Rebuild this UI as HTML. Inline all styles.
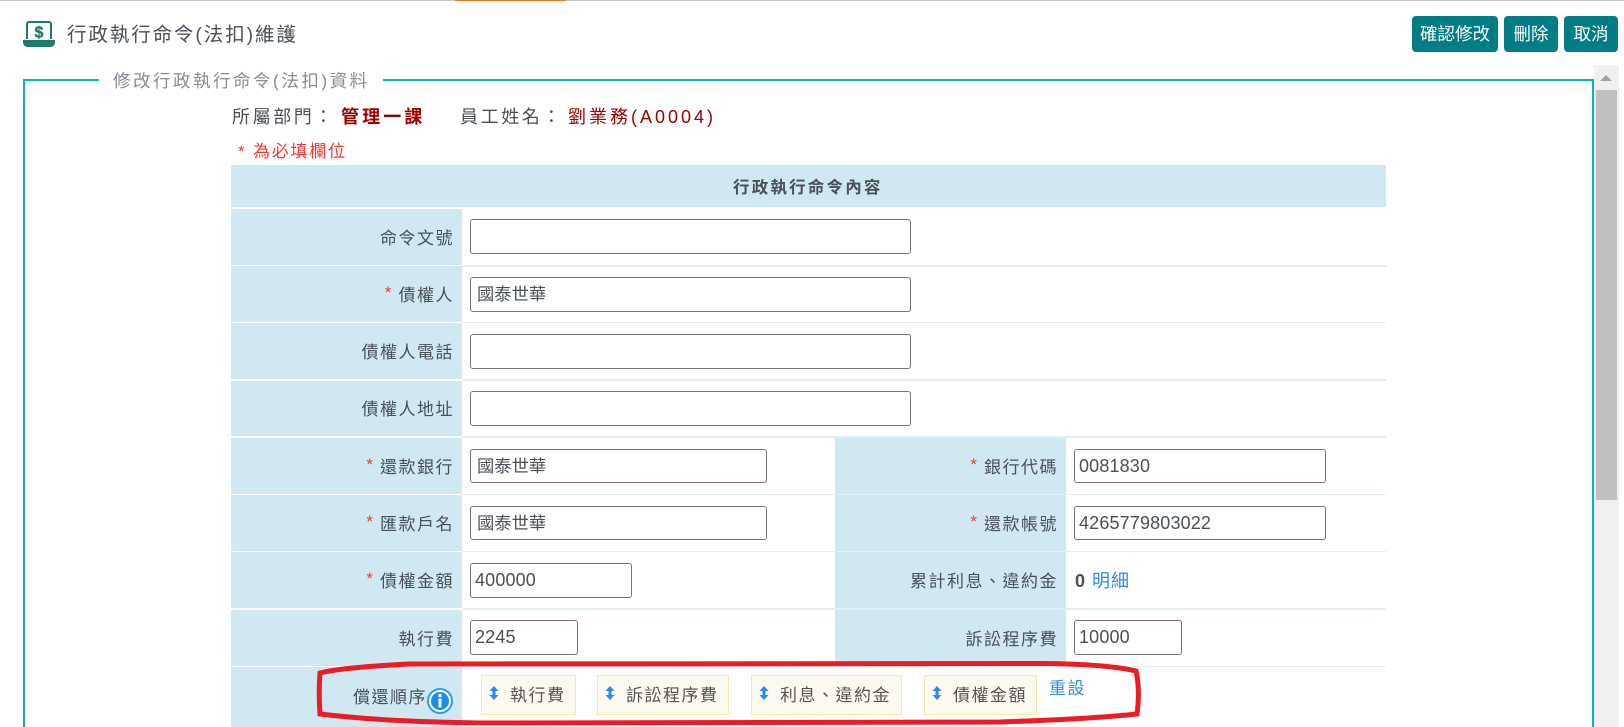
<!DOCTYPE html>
<html lang="zh-Hant">
<head>
<meta charset="utf-8">
<title>行政執行命令(法扣)維護</title>
<style>
html,body{margin:0;padding:0;background:#fff;}
body{position:relative;width:1624px;height:727px;overflow:hidden;font-family:"Liberation Sans","Noto Sans CJK TC",sans-serif;color:#495057;}
.a{position:absolute;white-space:nowrap;}
.bg{position:absolute;background:#cfe8f2;}
.sep{position:absolute;left:462px;width:924px;height:2px;background:#e3eff7;}
.l{position:absolute;display:flex;align-items:center;justify-content:flex-end;font-size:17px;letter-spacing:1.5px;color:#495057;white-space:nowrap;padding-bottom:2px;box-sizing:border-box;}
.l1{left:231px;width:223px;}
.l2{left:835px;width:223px;}
.l b{font-weight:400;color:#f33;margin-right:7px;letter-spacing:0;}
.i{position:absolute;box-sizing:border-box;border:1px solid #767676;border-radius:3px;background:#fff;font-size:18px;line-height:32px;padding-left:6px;color:#495057;white-space:nowrap;overflow:hidden;letter-spacing:.15px;}
.c{font-size:17.3px;letter-spacing:0;}
.btn{position:absolute;top:16px;height:36px;background:#007d85;border-radius:4px;color:#fff;font-size:17.5px;line-height:36px;text-align:center;}
.t{position:absolute;top:675px;height:40px;box-sizing:border-box;border:1px solid #f8e8a8;background:#fbf9f0;font-size:17px;letter-spacing:1.5px;line-height:40px;color:#555;white-space:nowrap;}
.t svg{position:absolute;left:7px;top:9px;}
.t span{position:absolute;top:0;left:28px;}
</style>
</head>
<body>
<div class="a" style="left:0;top:0;width:1624px;height:1px;background:#c8c8c8;"></div>
<div class="a" style="left:455px;top:0;width:111px;height:1px;background:#f07020;"></div>

<svg class="a" style="left:23px;top:21px;" width="32" height="27" viewBox="0 0 32 27">
<path d="M4 18V3a2 2 0 0 1 2-2h20a2 2 0 0 1 2 2v15" fill="none" stroke="#1f7a6b" stroke-width="2"/>
<path d="M0 19h32v2c0 3-2 5-5 5H5c-3 0-5-2-5-5z" fill="#1f7a6b"/>
<text x="16" y="16.500" text-anchor="middle" font-family="Liberation Sans" font-weight="700" font-size="16" stroke="#1f7a6b" stroke-width=".4" fill="#1f7a6b">$</text>
</svg>
<div class="a" style="left:67px;top:21px;font-size:19.5px;line-height:28px;letter-spacing:1.9px;color:#495057;">行政執行命令(法扣)維護</div>

<div class="btn" style="left:1412px;width:86px;">確認修改</div>
<div class="btn" style="left:1504px;width:54px;">刪除</div>
<div class="btn" style="left:1564px;width:54px;">取消</div>

<!-- fieldset -->
<div class="a" style="left:23px;top:79px;width:76px;height:2px;background:#00b8c4;"></div>
<div class="a" style="left:383px;top:79px;width:1211px;height:2px;background:#00b8c4;"></div>
<div class="a" style="left:23px;top:79px;width:2px;height:648px;background:#00b8c4;"></div>
<div class="a" style="left:1592px;top:79px;width:2px;height:648px;background:#00b8c4;"></div>
<div class="a" style="left:113px;top:68px;font-size:17.5px;line-height:26px;letter-spacing:2.5px;color:#868e96;">修改行政執行命令(法扣)資料</div>

<!-- scrollbar -->
<div class="a" style="left:1594px;top:65px;width:25px;height:662px;background:#f0f0f0;"></div>
<div class="a" style="left:1596px;top:90px;width:21px;height:410px;background:#c0c0c0;"></div>
<svg class="a" style="left:1600px;top:74px;" width="12" height="8"><path d="M6 1L12 7H0z" fill="#a3a3a3"/></svg>

<!-- info -->
<div class="a" style="left:232px;top:104px;font-size:18px;line-height:26px;letter-spacing:2.6px;color:#495057;">所屬部門：</div>
<div class="a" style="left:341px;top:104px;font-size:18px;line-height:26px;letter-spacing:3.1px;color:#a00000;font-weight:700;">管理一課</div>
<div class="a" style="left:460px;top:104px;font-size:18px;line-height:26px;letter-spacing:2.6px;color:#495057;">員工姓名：</div>
<div class="a" style="left:568px;top:104px;font-size:18px;line-height:26px;letter-spacing:3px;color:#a00000;">劉業務(A0004)</div>
<div class="a" style="left:238px;top:139.500px;font-size:17px;line-height:24px;letter-spacing:1.8px;color:#f33;">* 為必填欄位</div>

<!-- table header -->
<div class="bg" style="left:231px;top:165px;width:1155px;height:42px;"></div>
<div class="a" style="left:733px;top:175px;font-size:16.5px;line-height:26px;letter-spacing:2.2px;font-weight:700;color:#495057;">行政執行命令內容</div>

<!-- separators -->
<div class="sep" style="top:265px;"></div>
<div class="sep" style="top:322px;height:1px;"></div>
<div class="sep" style="top:379px;"></div>
<div class="sep" style="top:436px;"></div>
<div class="sep" style="top:494px;height:1px;"></div>
<div class="sep" style="top:551px;height:1px;"></div>
<div class="sep" style="top:608px;"></div>
<div class="sep" style="top:666px;height:1px;"></div>

<!-- label column left -->
<div class="bg" style="left:231px;top:209px;width:231px;height:56px;"></div>
<div class="bg" style="left:231px;top:266px;width:231px;height:56px;"></div>
<div class="bg" style="left:231px;top:323px;width:231px;height:56px;"></div>
<div class="bg" style="left:231px;top:381px;width:231px;height:55px;"></div>
<div class="bg" style="left:231px;top:438px;width:231px;height:56px;"></div>
<div class="bg" style="left:231px;top:495px;width:231px;height:56px;"></div>
<div class="bg" style="left:231px;top:552px;width:231px;height:56px;"></div>
<div class="bg" style="left:231px;top:610px;width:231px;height:56px;"></div>
<div class="bg" style="left:231px;top:667px;width:231px;height:60px;"></div>

<!-- label column right -->
<div class="bg" style="left:835px;top:438px;width:231px;height:56px;"></div>
<div class="bg" style="left:835px;top:495px;width:231px;height:56px;"></div>
<div class="bg" style="left:835px;top:552px;width:231px;height:56px;"></div>
<div class="bg" style="left:835px;top:610px;width:231px;height:56px;"></div>

<!-- labels -->
<div class="l l1" style="top:209px;height:56px;">命令文號</div>
<div class="l l1" style="top:266px;height:56px;"><b>*</b>債權人</div>
<div class="l l1" style="top:323px;height:56px;">債權人電話</div>
<div class="l l1" style="top:381px;height:55px;">債權人地址</div>
<div class="l l1" style="top:438px;height:56px;"><b>*</b>還款銀行</div>
<div class="l l1" style="top:495px;height:56px;"><b>*</b>匯款戶名</div>
<div class="l l1" style="top:552px;height:56px;"><b>*</b>債權金額</div>
<div class="l l1" style="top:610px;height:56px;">執行費</div>
<div class="l l2" style="top:438px;height:56px;"><b>*</b>銀行代碼</div>
<div class="l l2" style="top:495px;height:56px;"><b>*</b>還款帳號</div>
<div class="l l2" style="top:552px;height:56px;">累計利息、違約金</div>
<div class="l l2" style="top:610px;height:56px;">訴訟程序費</div>
<div class="a" style="left:353px;top:686px;font-size:17px;line-height:24px;letter-spacing:1.5px;color:#495057;">償還順序</div>

<!-- inputs -->
<div class="i" style="left:470px;top:219px;width:441px;height:35px;"></div>
<div class="i c" style="left:470px;top:277px;width:441px;height:35px;">國泰世華</div>
<div class="i" style="left:470px;top:334px;width:441px;height:35px;"></div>
<div class="i" style="left:470px;top:391px;width:441px;height:35px;"></div>
<div class="i c" style="left:470px;top:449px;width:297px;height:34px;">國泰世華</div>
<div class="i c" style="left:470px;top:506px;width:297px;height:34px;">國泰世華</div>
<div class="i" style="left:470px;top:563px;width:162px;height:35px;padding-left:4px;">400000</div>
<div class="i" style="left:470px;top:620px;width:108px;height:35px;padding-left:4px;">2245</div>
<div class="i" style="left:1074px;top:449px;width:252px;height:34px;padding-left:4px;">0081830</div>
<div class="i" style="left:1074px;top:506px;width:252px;height:34px;padding-left:4px;">4265779803022</div>
<div class="i" style="left:1074px;top:620px;width:108px;height:35px;padding-left:4px;">10000</div>

<div class="a" style="left:1075px;top:568px;font-size:18px;line-height:26px;font-weight:700;color:#495057;">0</div>
<div class="a" style="left:1092px;top:568px;font-size:18px;line-height:26px;color:#2a8cf0;letter-spacing:1px;">明細</div>

<!-- info icon -->
<svg class="a" style="left:427px;top:688px;" width="26" height="26" viewBox="0 0 26 26">
<circle cx="13" cy="13" r="12" fill="#fff" stroke="#2e9df0" stroke-width="2"/>
<circle cx="13" cy="13" r="9" fill="#1b8fe6"/>
<circle cx="13" cy="7.500" r="1.700" fill="#fff"/>
<rect x="11.500" y="10.500" width="3" height="9" fill="#fff"/>
</svg>

<!-- sortable tiles -->
<div class="t" style="left:481px;width:95px;"><svg width="10" height="16" viewBox="0 0 10 16"><path d="M5 1L9.500 6H6.500V10H9.500L5 15L.5 10H3.500V6H.5z" fill="#2a8cf0"/></svg><span>執行費</span></div>
<div class="t" style="left:597px;width:132px;"><svg width="10" height="16" viewBox="0 0 10 16"><path d="M5 1L9.500 6H6.500V10H9.500L5 15L.5 10H3.500V6H.5z" fill="#2a8cf0"/></svg><span>訴訟程序費</span></div>
<div class="t" style="left:751px;width:151px;"><svg width="10" height="16" viewBox="0 0 10 16"><path d="M5 1L9.500 6H6.500V10H9.500L5 15L.5 10H3.500V6H.5z" fill="#2a8cf0"/></svg><span>利息、違約金</span></div>
<div class="t" style="left:924px;width:113px;"><svg width="10" height="16" viewBox="0 0 10 16"><path d="M5 1L9.500 6H6.500V10H9.500L5 15L.5 10H3.500V6H.5z" fill="#2a8cf0"/></svg><span>債權金額</span></div>
<div class="a" style="left:1049px;top:677px;font-size:17px;line-height:24px;color:#2a8cf0;letter-spacing:1.5px;">重設</div>

<!-- red annotation -->
<svg class="a" style="left:0;top:0;pointer-events:none;" width="1624" height="727">
<path d="M320 714C319 700 319 686 320 673C335 669 370 666 410 664L1045 663.500C1085 664 1115 666 1136 671C1139 685 1139 700 1137 714C1100 718 1060 720 1000 722L480 723C420 722 370 720 320 714Z" fill="none" stroke="#ed1c24" stroke-width="5"/>
</svg>
</body>
</html>
